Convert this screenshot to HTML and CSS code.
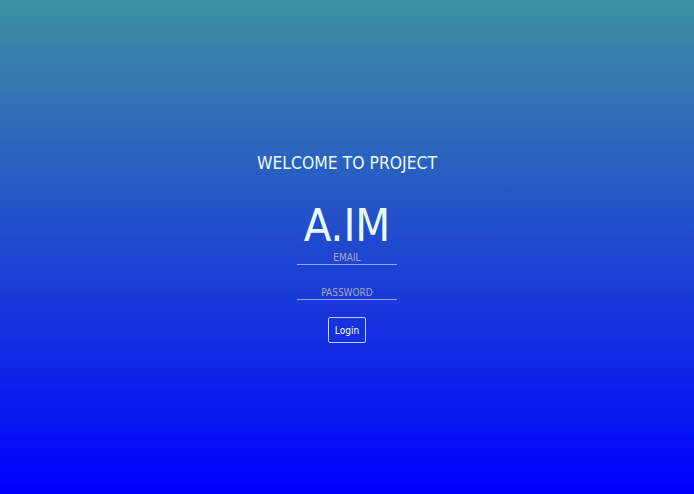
FILE: index.html
```html
<!DOCTYPE html>
<html>
<head>
<meta charset="utf-8">
<link rel="stylesheet" href="styles.css">
</head>
<body>
<main class="page">
  <h2 class="welcome">WELCOME TO PROJECT</h2>
  <h1 class="brand">A.IM</h1>
  <form class="form">
    <input class="field" type="text" placeholder="EMAIL">
    <input class="field" type="password" placeholder="PASSWORD">
    <button class="login" type="button">Login</button>
  </form>
</main>
</body>
</html>
```
FILE: styles.css
```css
html, body {
  margin: 0;
  height: 100%;
}
body {
  background: linear-gradient(to bottom, #3e90a0 0%, #0000ff 100%);
  font-family: "DejaVu Sans Condensed", "DejaVu Sans", sans-serif;
  color: #e8fbf8;
}
.page {
  height: 100%;
  display: flex;
  flex-direction: column;
  align-items: center;
  padding-top: 152px;
  box-sizing: border-box;
}
.welcome {
  margin: 0;
  font-weight: normal;
  font-size: 17.4px;
  line-height: 22px;
  color: #e8fbf8;
}
.brand {
  margin: 27px 0 0 0;
  font-weight: normal;
  font-size: 45px;
  line-height: 50px;
  color: #e8fbf8;
}
.form {
  display: flex;
  flex-direction: column;
  align-items: center;
}
.field {
  width: 100px;
  box-sizing: border-box;
  background: transparent;
  border: none;
  border-bottom: 1px solid rgba(200, 210, 255, 0.7);
  text-align: center;
  font-family: inherit;
  font-size: 10px;
  padding: 0 0 1px 0;
  height: 14px;
  color: #fff;
  outline: none;
}
.field + .field {
  margin-top: 21px;
}
.field::placeholder {
  color: #a9a9b8;
}
.login {
  margin-top: 17px;
  width: 38px;
  height: 26px;
  background: transparent;
  border: 1px solid rgba(225, 235, 255, 0.85);
  border-radius: 2px;
  color: #fff;
  font-family: inherit;
  font-size: 10px;
  padding: 0;
}
```
